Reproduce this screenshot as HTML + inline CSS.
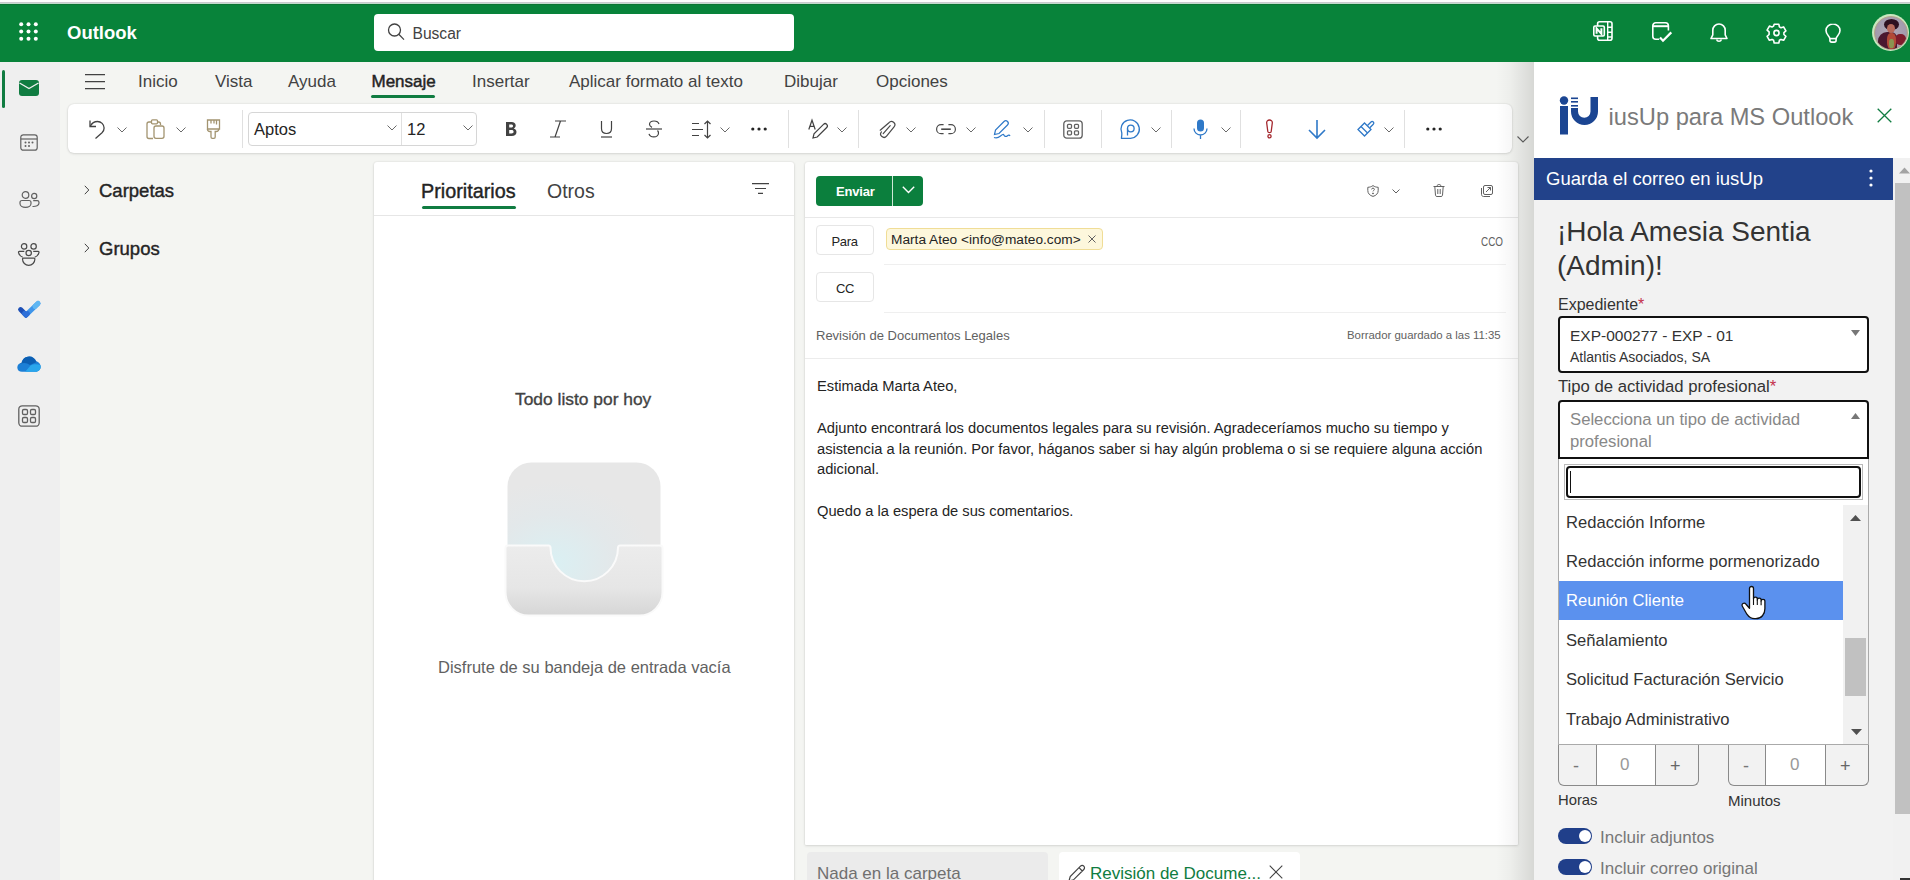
<!DOCTYPE html>
<html><head><meta charset="utf-8">
<style>
*{margin:0;padding:0;box-sizing:border-box}
html,body{width:1910px;height:880px;overflow:hidden;background:#f4f5f2;font-family:"Liberation Sans",sans-serif;color:#242424}
.a{position:absolute}
.t{position:absolute;white-space:nowrap;line-height:1}
svg{position:absolute;overflow:visible}
#topstrip{left:0;top:0;width:1910px;height:4px;background:#fdfdfd}
#topstrip2{left:0;top:2px;width:1910px;height:2px;background:linear-gradient(#cacace 0 50%,#c2dccd 50% 100%)}
#header{left:0;top:4px;width:1910px;height:58px;background:#08833a;border-top:1px solid #0b7432}
#rail{left:0;top:62px;width:60px;height:818px;background:#efefef}
#shadowband{left:1496px;top:62px;width:38px;height:818px;background:linear-gradient(to right,rgba(0,0,0,0) 0%,rgba(0,0,0,0.03) 40%,rgba(0,0,0,0.12) 100%)}
.card{position:absolute;background:#fff;border-radius:3px;box-shadow:0 0 2px rgba(0,0,0,.12),0 1px 3px rgba(0,0,0,.1)}
.sep{position:absolute;width:1px;background:#e0e0e0}
.chev{stroke:#6a6a6a;stroke-width:1;fill:none}
</style></head><body>
<div class="a" id="topstrip"></div>
<div class="a" id="topstrip2"></div>
<div class="a" id="header"></div>

<!-- waffle -->
<svg style="left:19px;top:22px" width="20" height="20" viewBox="0 0 20 20">
<g fill="#fff"><circle cx="2.2" cy="2.2" r="2"/><circle cx="9.5" cy="2.2" r="2"/><circle cx="16.8" cy="2.2" r="2"/>
<circle cx="2.2" cy="9.5" r="2"/><circle cx="9.5" cy="9.5" r="2"/><circle cx="16.8" cy="9.5" r="2"/>
<circle cx="2.2" cy="16.8" r="2"/><circle cx="9.5" cy="16.8" r="2"/><circle cx="16.8" cy="16.8" r="2"/></g></svg>
<div class="t" style="left:67px;top:24px;font-size:18.5px;font-weight:bold;color:#fff">Outlook</div>

<!-- search -->
<div class="a" style="left:374px;top:14px;width:420px;height:37px;background:#fff;border-radius:4px"></div>
<svg style="left:387px;top:23px" width="18" height="18" viewBox="0 0 18 18"><circle cx="7.5" cy="7" r="6" stroke="#424242" stroke-width="1.3" fill="none"/><path d="M11.8 11.3 L17 16.6" stroke="#424242" stroke-width="1.3"/></svg>
<div class="t" style="left:412.5px;top:25.5px;font-size:15.6px;color:#424242">Buscar</div>

<div class="a" id="rail"></div>

<!-- header right icons -->
<svg style="left:1593px;top:21px" width="20" height="20" viewBox="0 0 20 20" fill="none" stroke="#fff" stroke-width="1.6">
<rect x="4.6" y="0.8" width="14.4" height="18.4" rx="2"/><path d="M14.7 1v18M14.7 6.2h4.3M14.7 11.2h4.3M14.7 16h4.3" stroke-width="1.4"/>
<rect x="0.8" y="5" width="10.5" height="10" rx="1.2" fill="#098238"/><path d="M3.6 12.8V7.3l4.8 5.5V7.3" stroke-width="2"/></svg>
<svg style="left:1652px;top:22px" width="21" height="21" viewBox="0 0 21 21" fill="none" stroke="#fff" stroke-width="1.6">
<path d="M7.2 17.3H3.8a3 3 0 0 1-3-3V3.8a3 3 0 0 1 3-3h9.6a3 3 0 0 1 3 3v4.8"/><path d="M1 4.2h15.2" stroke-width="2"/><path d="M8 15.5l3 3.2 8.3-8.3" stroke-width="2.2"/></svg>
<svg style="left:1710px;top:23px" width="18" height="20" viewBox="0 0 18 20" fill="none" stroke="#fff" stroke-width="1.6">
<path d="M9 1c-3.6 0-6.2 2.8-6.2 6.3v4.5L1 15.5h16l-1.8-3.7V7.3C15.2 3.8 12.6 1 9 1z" stroke-linejoin="round"/><path d="M6.6 16.5a2.5 2.5 0 0 0 4.8 0"/></svg>
<svg style="left:1766px;top:23px" width="21" height="20" viewBox="0 0 21 20" fill="none" stroke="#fff" stroke-width="1.6" stroke-linejoin="round">
<path d="M8.2 1.2h4.6l.6 2.7 1.6.9 2.6-.9 2.3 4-2 1.8v1.8l2 1.8-2.3 4-2.6-.9-1.6.9-.6 2.7H8.2l-.6-2.7-1.6-.9-2.6.9-2.3-4 2-1.8V8.9l-2-1.8 2.3-4 2.6.9 1.6-.9z"/><circle cx="10.5" cy="10" r="2.6"/></svg>
<svg style="left:1825px;top:23px" width="16" height="20" viewBox="0 0 16 20" fill="none" stroke="#fff" stroke-width="1.6">
<path d="M8 1C4.2 1 1 3.9 1 7.6c0 2.3 1.1 3.8 2.3 5.1.9 1 1.6 2 1.6 3.2v1.4c0 1 .8 1.8 1.8 1.8h2.6c1 0 1.8-.8 1.8-1.8v-1.4c0-1.2.7-2.2 1.6-3.2C13.9 11.4 15 9.9 15 7.6 15 3.9 11.8 1 8 1z"/><path d="M5 15.6h6"/></svg>
<!-- avatar -->
<div class="a" style="left:1872px;top:14px;width:37px;height:37px;border-radius:50%;background:#c8e8c0"></div>
<div class="a" style="left:1873.5px;top:15.5px;width:34px;height:34px;border-radius:50%;overflow:hidden;background:radial-gradient(circle at 50% 45%,#b0a8b8 0%,#a49cae 60%,#9a8a80 100%);border:1px solid #b5a48a">
<div class="a" style="left:3px;top:15px;width:19px;height:18px;border-radius:9px 6px 0 0;background:#4a1830"></div>
<div class="a" style="left:20px;top:17px;width:11px;height:11px;border-radius:45%;background:#7e1c2c"></div>
<div class="a" style="left:12.5px;top:16px;width:9px;height:16px;border-radius:40%;background:#b24a38"></div>
<div class="a" style="left:14.5px;top:22px;width:5px;height:9px;border-radius:40%;background:#8a9450"></div>
<div class="a" style="left:9px;top:2px;width:15px;height:11px;border-radius:50%;background:#2e1020"></div>
<div class="a" style="left:12.5px;top:7px;width:8px;height:9px;border-radius:50%;background:#b86a5c"></div>
</div>

<!-- left rail icons -->
<div class="a" style="left:2px;top:70px;width:3px;height:38px;border-radius:2px;background:#107c41"></div>
<svg style="left:19px;top:80px" width="20" height="16" viewBox="0 0 20 16"><rect x="0" y="0" width="20" height="16" rx="3" fill="#107c41"/><path d="M0.5 3 L10 8.5 L19.5 3" stroke="#efefef" stroke-width="1.4" fill="none"/></svg>
<svg style="left:20px;top:134px" width="18" height="17" viewBox="0 0 18 17" fill="none" stroke="#616161" stroke-width="1.2">
<rect x="0.8" y="0.8" width="16.4" height="15.4" rx="2.5"/><path d="M0.8 5h16.4"/><g fill="#616161" stroke="none"><circle cx="5.5" cy="8.5" r="1"/><circle cx="9" cy="8.5" r="1"/><circle cx="12.5" cy="8.5" r="1"/><circle cx="5.5" cy="12" r="1"/><circle cx="9" cy="12" r="1"/></g></svg>
<svg style="left:19px;top:191px" width="21" height="17" viewBox="0 0 21 17" fill="none" stroke="#616161" stroke-width="1.2">
<circle cx="6.5" cy="4" r="3.3"/><path d="M1 11.5c0-1.2.8-2 2-2h7c1.2 0 2 .8 2 2v1c0 2-2.2 3.8-5.5 3.8S1 14.5 1 12.5z"/><circle cx="15.2" cy="5" r="2.6"/><path d="M13.5 15.5c3.5.2 6.5-1 6.5-3.5v-.5c0-1-.7-1.8-1.8-1.8h-4"/></svg>
<svg style="left:17px;top:241px" width="24" height="26" viewBox="0 0 24 26" fill="none" stroke="#4a4a4a" stroke-width="1.2">
<circle cx="7.1" cy="5.4" r="2.7"/><circle cx="16.6" cy="5.4" r="2.7"/><circle cx="11.7" cy="12" r="2.7"/>
<path d="M7.3 10.4H2.3c-.5 0-.9.4-.8.9.5 2.4 2 4.2 4.3 5"/><path d="M16.2 10.4h5c.5 0 .9.4.8.9-.5 2.4-2 4.2-4.3 5"/>
<path d="M6.4 17.2h10.6c.5 0 .9.4.9.9a6.2 6.2 0 0 1-12.4 0c0-.5.4-.9.9-.9z"/></svg>
<svg style="left:17px;top:299.5px" width="24" height="20" viewBox="0 0 24 20" fill="none" stroke-linecap="round" stroke-linejoin="round">
<path d="M9 15L21 3.5" stroke="#3f95ea" stroke-width="5"/><path d="M18 6.4L21 3.5" stroke="#5fb6f2" stroke-width="5"/><path d="M3.6 9.6L9 15" stroke="#1d4fb6" stroke-width="5"/><path d="M7.5 13.5L9 15l1.5-1.4" stroke="#2d6fd8" stroke-width="5"/></svg>
<svg style="left:17px;top:356px" width="24" height="16" viewBox="0 0 24 16">
<defs><clipPath id="cl"><path d="M5 15.8C2.3 15.8 0.3 13.9 0.3 11.4 0.3 9 2.1 7.2 4.5 7 5.3 3.3 8.3 0.5 12.2 0.5c3.3 0 6 2 7 5 2.6.4 4.5 2.6 4.5 5.3 0 2.8-2.2 5-5 5z"/></clipPath></defs>
<g clip-path="url(#cl)"><rect x="0" y="0" width="24" height="16" fill="#1c7fd6"/><path d="M3 8C7 6 10 7 13 9L24 4V0H0z" fill="#0c5fb3"/><path d="M8 16L13.5 9.5C16 8 20 8 24 9V16z" fill="#2aa6ec"/></g></svg>
<svg style="left:18px;top:405px" width="22" height="22" viewBox="0 0 22 22" fill="none" stroke="#616161" stroke-width="1.3">
<rect x="0.8" y="0.8" width="20.4" height="20.4" rx="3.5"/><rect x="4.5" y="4.5" width="5" height="5" rx="1.3"/><rect x="12.5" y="4.5" width="5" height="5" rx="1.3"/><rect x="4.5" y="12.5" width="5" height="5" rx="1.3"/><rect x="12.5" y="12.5" width="5" height="5" rx="1.3"/></svg>

<!-- ribbon tabs -->
<svg style="left:85px;top:74px" width="20" height="15" viewBox="0 0 20 15" stroke="#424242" stroke-width="1.1"><path d="M0 0.6h20M0 7.6h20M0 14.6h20"/></svg>
<div class="t" style="left:138px;top:73px;font-size:17px;color:#424242">Inicio</div>
<div class="t" style="left:215px;top:73px;font-size:17px;color:#424242">Vista</div>
<div class="t" style="left:288px;top:73px;font-size:17px;color:#424242">Ayuda</div>
<div class="t" style="left:371.5px;top:73px;font-size:17px;color:#242424;-webkit-text-stroke:0.45px #242424">Mensaje</div>
<div class="a" style="left:371px;top:95px;width:64px;height:3px;border-radius:2px;background:#107c41"></div>
<div class="t" style="left:472px;top:73px;font-size:17px;color:#424242">Insertar</div>
<div class="t" style="left:569px;top:73px;font-size:17px;color:#424242">Aplicar formato al texto</div>
<div class="t" style="left:784px;top:73px;font-size:17px;color:#424242">Dibujar</div>
<div class="t" style="left:876px;top:73px;font-size:17px;color:#424242">Opciones</div>

<!-- TOOLBAR -->
<div class="card" style="left:68px;top:104px;width:1444px;height:49px;border-radius:6px"></div>
<div id="toolbar">
<!-- undo -->
<svg style="left:89px;top:119px" width="17" height="20" viewBox="0 0 17 20" fill="none" stroke="#424242" stroke-width="1.3">
<path d="M1 1.5v6h6"/><path d="M1.3 7.2C2.8 4.3 5.3 2.5 8.5 2.5c3.6 0 6.6 2.9 6.6 6.5 0 1.9-.8 3.6-2.1 4.8L6.5 19.5"/></svg>
<svg style="left:117px;top:127px" width="10" height="6" viewBox="0 0 10 6"><path class="chev" d="M0.5 0.5l4.5 4.5 4.5-4.5"/></svg>
<!-- paste -->
<svg style="left:146px;top:119px" width="19" height="20" viewBox="0 0 19 20" fill="none" stroke="#a39470" stroke-width="1.3">
<path d="M6 3H3a2 2 0 0 0-2 2v12.5a2 2 0 0 0 2 2h4"/><rect x="5.5" y="0.8" width="6" height="4" rx="1"/><path d="M11.5 3h1a2 2 0 0 1 2 2v1"/><rect x="8" y="7" width="10" height="12.3" rx="2"/></svg>
<svg style="left:176px;top:127px" width="10" height="6" viewBox="0 0 10 6"><path class="chev" d="M0.5 0.5l4.5 4.5 4.5-4.5"/></svg>
<!-- format painter -->
<svg style="left:206px;top:119px" width="15" height="20" viewBox="0 0 15 20" fill="none" stroke="#a39470" stroke-width="1.3">
<path d="M1.5 1h12v9h-12z"/><path d="M5 1v3.5M8 1v3.5M10.5 1v4.5"/><path d="M1.5 10c0 1.5 1 2.5 2.5 2.5h1v5.5c0 .8.6 1.3 1.3 1.3h1.6c.7 0 1.3-.5 1.3-1.3v-5.5h1c1.5 0 2.5-1 2.5-2.5"/></svg>
<div class="sep" style="left:242px;top:110px;height:38px"></div>
<!-- font boxes -->
<div class="a" style="left:248px;top:112px;width:229px;height:34px;border:1px solid #d6d6d6;border-radius:4px;background:#fff"></div>
<div class="a" style="left:401px;top:113px;width:1px;height:32px;background:#e0e0e0"></div>
<div class="t" style="left:254px;top:121px;font-size:16.5px;color:#242424">Aptos</div>
<svg style="left:387px;top:125px" width="10" height="6" viewBox="0 0 10 6"><path class="chev" d="M0.5 0.5l4.5 4.5 4.5-4.5"/></svg>
<div class="t" style="left:407px;top:121px;font-size:16.5px;color:#242424">12</div>
<svg style="left:463px;top:125px" width="10" height="6" viewBox="0 0 10 6"><path class="chev" d="M0.5 0.5l4.5 4.5 4.5-4.5"/></svg>
<!-- B I U S -->
<svg style="left:505px;top:121px" width="13" height="16" viewBox="0 0 13 16"><path d="M1 1h5.5c2.6 0 4.2 1.3 4.2 3.5 0 1.4-.8 2.5-2 3 1.6.4 2.8 1.7 2.8 3.6 0 2.6-1.9 4-4.8 4H1z M4.2 3.6v3h2c1.2 0 1.9-.6 1.9-1.5s-.7-1.5-1.9-1.5z M4.2 9v3.4h2.3c1.4 0 2.1-.6 2.1-1.7S7.9 9 6.5 9z" fill="#424242" fill-rule="evenodd"/></svg>
<svg style="left:549px;top:120px" width="18" height="18" viewBox="0 0 18 18" fill="none" stroke="#424242" stroke-width="1.2"><path d="M6 1h11M1 17h10M11.5 1L6 17"/></svg>
<svg style="left:600px;top:120px" width="13" height="18" viewBox="0 0 13 18" fill="none" stroke="#424242" stroke-width="1.2"><path d="M1.5 1v7.5c0 3 2 5 5 5s5-2 5-5V1"/><path d="M1 17h11"/></svg>
<svg style="left:645px;top:120px" width="18" height="18" viewBox="0 0 18 18" fill="none" stroke="#424242" stroke-width="1.2"><path d="M14 4c-.6-2-2.5-3-5-3-2.8 0-4.5 1.4-4.5 3.3 0 1.4.8 2.4 2.5 3.1"/><path d="M1 9h16"/><path d="M12.5 10.5c.6.6 1 1.4 1 2.4 0 2.3-2 4-4.7 4-2.5 0-4.3-1.1-4.8-3"/></svg>
<!-- line spacing -->
<svg style="left:691px;top:120px" width="21" height="19" viewBox="0 0 21 19" fill="none" stroke="#424242" stroke-width="1.2"><path d="M1 3.5h7M1 9.5h11M1 15.5h7"/><path d="M16.5 1v17M13.5 4l3-3 3 3M13.5 15l3 3 3-3"/></svg>
<svg style="left:720px;top:127px" width="10" height="6" viewBox="0 0 10 6"><path class="chev" d="M0.5 0.5l4.5 4.5 4.5-4.5"/></svg>
<svg style="left:751px;top:127px" width="16" height="4" viewBox="0 0 16 4" fill="#242424"><circle cx="1.8" cy="2" r="1.6"/><circle cx="8" cy="2" r="1.6"/><circle cx="14.2" cy="2" r="1.6"/></svg>
<div class="sep" style="left:788px;top:110px;height:38px"></div>
<!-- editor -->
<svg style="left:808px;top:119px" width="21" height="20" viewBox="0 0 21 20" fill="none" stroke="#424242" stroke-width="1.2"><path d="M0.8 10.5L4 1.2 7.2 10.5M2 7.3h4"/><path d="M5 19l1-4.2L15.5 5.3c.9-.9 2.3-.9 3.2 0 .9.9.9 2.3 0 3.2L9.2 18z"/></svg>
<svg style="left:837px;top:127px" width="10" height="6" viewBox="0 0 10 6"><path class="chev" d="M0.5 0.5l4.5 4.5 4.5-4.5"/></svg>
<div class="sep" style="left:858px;top:110px;height:38px"></div>
<!-- paperclip -->
<svg style="left:879px;top:120px" width="17" height="19" viewBox="0 0 17 19" fill="none" stroke="#4a4a4a" stroke-width="1.2" stroke-linecap="round">
<path d="M1.2 10.2L9.94 2.71A3.3 3.3 0 0 1 15.06 6.89L7.56 16.09A3.3 3.3 0 0 1 2.44 11.91"/><path d="M4.2 13.6L11.2 5.6"/></svg>
<svg style="left:906px;top:127px" width="10" height="6" viewBox="0 0 10 6"><path class="chev" d="M0.5 0.5l4.5 4.5 4.5-4.5"/></svg>
<!-- link -->
<svg style="left:936px;top:123.5px" width="20" height="11" viewBox="0 0 20 11" fill="none" stroke="#4a4a4a" stroke-width="1.2"><path d="M7.6 0.7H5.1a4.5 4.5 0 0 0 0 9H7.6M12.4 0.7h2.5a4.5 4.5 0 0 1 0 9h-2.5"/><path d="M5.2 5.2h9.6" stroke-width="1.6"/></svg>
<svg style="left:966px;top:127px" width="10" height="6" viewBox="0 0 10 6"><path class="chev" d="M0.5 0.5l4.5 4.5 4.5-4.5"/></svg>
<!-- signature pen -->
<svg style="left:993px;top:119px" width="21" height="20" viewBox="0 0 21 20" fill="none" stroke="#2f79c8" stroke-width="1.2"><path d="M1.5 15.5l1-4.5 8.5-8.5c1-1 2.5-1 3.5 0s1 2.5 0 3.5L6 14.5z"/><path d="M1 18.5c2 .8 4.5.2 6.5-1.5s3-2 3.5-.8c.5 1.2 2 1.8 3.5.5 1-.8 2-.6 2.5.3"/></svg>
<svg style="left:1023px;top:127px" width="10" height="6" viewBox="0 0 10 6"><path class="chev" d="M0.5 0.5l4.5 4.5 4.5-4.5"/></svg>
<div class="sep" style="left:1044px;top:110px;height:38px"></div>
<!-- apps -->
<svg style="left:1063px;top:120px" width="20" height="19" viewBox="0 0 20 19" fill="none" stroke="#616161" stroke-width="1.3"><rect x="0.8" y="0.8" width="18.4" height="17.4" rx="3"/><rect x="4.5" y="4.3" width="4" height="4" rx="1"/><rect x="11.5" y="4.3" width="4" height="4" rx="1"/><rect x="4.5" y="10.8" width="4" height="4" rx="1"/><rect x="11.5" y="10.8" width="4" height="4" rx="1"/></svg>
<div class="sep" style="left:1101px;top:110px;height:38px"></div>
<!-- loop -->
<svg style="left:1120px;top:119px" width="21" height="20" viewBox="0 0 21 20" fill="none" stroke="#2f79c8" stroke-width="1.3"><path d="M1.5 18.5c.3-1.5.4-3 .3-4.5A9.2 9.2 0 1 1 10.5 19.3H1.5z"/><circle cx="10.8" cy="9.5" r="3.3"/><path d="M7.5 9.5v7"/></svg>
<svg style="left:1151px;top:127px" width="10" height="6" viewBox="0 0 10 6"><path class="chev" d="M0.5 0.5l4.5 4.5 4.5-4.5"/></svg>
<div class="sep" style="left:1171px;top:110px;height:38px"></div>
<!-- mic -->
<svg style="left:1193px;top:119px" width="15" height="20" viewBox="0 0 15 20"><rect x="4" y="0.5" width="7" height="12" rx="3.5" fill="#2f79c8"/><path d="M1 9.5a6.5 6.5 0 0 0 13 0M7.5 16v4" stroke="#2f79c8" stroke-width="1.3" fill="none"/></svg>
<svg style="left:1221px;top:127px" width="10" height="6" viewBox="0 0 10 6"><path class="chev" d="M0.5 0.5l4.5 4.5 4.5-4.5"/></svg>
<div class="sep" style="left:1240px;top:110px;height:38px"></div>
<!-- importance -->
<svg style="left:1265px;top:119px" width="9" height="20" viewBox="0 0 9 20" fill="none" stroke="#a4262c" stroke-width="1.3"><path d="M4.5 1c1.8 0 3 1.2 2.8 3L6.2 12.5c-.1.8-.8 1.2-1.7 1.2s-1.6-.4-1.7-1.2L1.7 4C1.5 2.2 2.7 1 4.5 1z"/><circle cx="4.5" cy="17.3" r="1.6"/></svg>
<!-- down arrow -->
<svg style="left:1308px;top:119px" width="18" height="20" viewBox="0 0 18 20" fill="none" stroke="#2f79c8" stroke-width="1.6"><path d="M9 1v18M1 11l8 8 8-8"/></svg>
<!-- brush -->
<svg style="left:1356px;top:119px" width="19" height="19" viewBox="0 0 19 19" fill="none" stroke="#2f79c8" stroke-width="1.3"><path d="M2 10.5l6.5-6.5 6.5 6.5-6.5 6.5z"/><path d="M5 7.5l6.5 6.5"/><path d="M11.5 6.5l3.5-3.5a1.6 1.6 0 0 1 2.3 2.3L13.8 8.8"/></svg>
<svg style="left:1384px;top:127px" width="10" height="6" viewBox="0 0 10 6"><path class="chev" d="M0.5 0.5l4.5 4.5 4.5-4.5"/></svg>
<div class="sep" style="left:1404px;top:110px;height:38px"></div>
<svg style="left:1426px;top:127px" width="16" height="4" viewBox="0 0 16 4" fill="#242424"><circle cx="1.8" cy="2" r="1.6"/><circle cx="8" cy="2" r="1.6"/><circle cx="14.2" cy="2" r="1.6"/></svg>
<svg style="left:1517px;top:136px" width="12" height="7" viewBox="0 0 12 7"><path d="M0.5 0.5l5.5 5.5 5.5-5.5" stroke="#616161" stroke-width="1.1" fill="none"/></svg>
</div>

<!-- folder pane -->
<svg style="left:84px;top:185px" width="6" height="10" viewBox="0 0 6 10"><path d="M0.8 0.8l4 4.2-4 4.2" stroke="#424242" stroke-width="1" fill="none"/></svg>
<div class="t" style="left:99px;top:182px;font-size:18.5px;color:#242424;-webkit-text-stroke:0.4px #242424">Carpetas</div>
<svg style="left:84px;top:243px" width="6" height="10" viewBox="0 0 6 10"><path d="M0.8 0.8l4 4.2-4 4.2" stroke="#424242" stroke-width="1" fill="none"/></svg>
<div class="t" style="left:99px;top:240px;font-size:18.5px;color:#242424;-webkit-text-stroke:0.4px #242424">Grupos</div>

<!-- mail list -->
<div class="card" style="left:374px;top:162px;width:420px;height:730px;border-radius:3px 3px 0 0"></div>
<div class="a" style="left:374px;top:215px;width:420px;height:1px;background:#e6e6e6"></div>
<div class="t" style="left:421px;top:182px;font-size:19.8px;color:#242424;-webkit-text-stroke:0.4px #242424">Prioritarios</div>
<div class="a" style="left:422px;top:206px;width:94px;height:3px;border-radius:2px;background:#107c41"></div>
<div class="t" style="left:547px;top:182px;font-size:19.5px;color:#424242">Otros</div>
<svg style="left:752px;top:183px" width="17" height="11" viewBox="0 0 17 11" stroke="#424242" stroke-width="1.1"><path d="M0 0.6h17M3 5.5h11M6 10.4h5"/></svg>
<div class="t" style="left:515px;top:391px;font-size:17.4px;color:#424242;-webkit-text-stroke:0.35px #424242">Todo listo por hoy</div>
<!-- tray illustration -->
<svg style="left:505px;top:462px" width="158" height="154" viewBox="0 0 158 154">
<defs>
<linearGradient id="trb" x1="0" y1="0" x2="0" y2="1"><stop offset="0" stop-color="#e6e6e6"/><stop offset="1" stop-color="#e9e9e9"/></linearGradient>
<radialGradient id="trg" cx="0.3" cy="0.8" r="0.65"><stop offset="0" stop-color="#daf0f3"/><stop offset="0.6" stop-color="#e3e8ea"/><stop offset="1" stop-color="#e7e7e7"/></radialGradient>
<linearGradient id="trf" x1="0" y1="0" x2="0" y2="1"><stop offset="0" stop-color="#ececec"/><stop offset=".6" stop-color="#e6e6e6"/><stop offset="1" stop-color="#d6d6d6"/></linearGradient>
</defs>
<rect x="2.5" y="0.5" width="153" height="125" rx="24" fill="url(#trg)"/>
<path d="M3 83.5H43.5c1.2 0 1.8.8 2 2A33.5 33.5 0 0 0 113 85.5c.2-1.2.8-2 2-2H155c1.5 0 2.5 1 2.5 2.5v44c0 13-10 23.5-23 23.5H23.5C10.5 153.5.5 143 .5 130V86c0-1.5 1-2.5 2.5-2.5z" fill="url(#trf)" stroke="#fafafa" stroke-width="2"/>
</svg>
<div class="t" style="left:438px;top:659px;font-size:16.5px;color:#616161">Disfrute de su bandeja de entrada vacía</div>

<!-- compose -->
<div class="card" style="left:805px;top:162px;width:713px;height:683px;border-radius:3px 3px 1px 1px"></div>
<div class="a" style="left:816px;top:176px;width:107px;height:30px;border-radius:4px;background:#0b7f3d"></div>
<div class="a" style="left:892px;top:176px;width:1px;height:30px;background:#cfe8d6"></div>
<div class="t" style="left:836px;top:185px;font-size:13px;font-weight:bold;color:#fff;letter-spacing:-0.2px">Enviar</div>
<svg style="left:902px;top:186px" width="13" height="8" viewBox="0 0 13 8"><path d="M0.8 0.8l5.7 5.7 5.7-5.7" stroke="#fff" stroke-width="1.4" fill="none"/></svg>
<!-- shield, chevron, trash, popout -->
<svg style="left:1367px;top:185px" width="12" height="12" viewBox="0 0 12 12" fill="none" stroke="#616161" stroke-width="1"><path d="M6 0.6C4.3 1.8 2.7 2.2 0.8 2.3v3.2c0 3 2 5 5.2 5.9 3.2-.9 5.2-2.9 5.2-5.9V2.3C9.3 2.2 7.7 1.8 6 .6z"/><path d="M4.6 4.4c0-.8.6-1.3 1.4-1.3s1.4.5 1.4 1.3c0 1-1.4 1-1.4 2" /><circle cx="6" cy="8.4" r=".5" fill="#616161"/></svg>
<svg style="left:1392px;top:189px" width="8" height="5" viewBox="0 0 8 5"><path d="M0.5 0.5l3.5 3.5 3.5-3.5" stroke="#616161" stroke-width="1" fill="none"/></svg>
<svg style="left:1433px;top:184px" width="12" height="13" viewBox="0 0 12 13" fill="none" stroke="#616161" stroke-width="1"><path d="M0.5 2.5h11M4.3 2.5V1.5c0-.5.4-.9.9-.9h1.6c.5 0 .9.4.9.9v1M1.8 2.5l.7 8.8c.1.8.7 1.2 1.4 1.2h4.2c.7 0 1.3-.4 1.4-1.2l.7-8.8M4.8 5v5M7.2 5v5"/></svg>
<svg style="left:1481px;top:185px" width="12" height="12" viewBox="0 0 12 12" fill="none" stroke="#616161" stroke-width="1"><rect x="2.5" y="0.5" width="9" height="9" rx="1.5"/><path d="M0.5 3v6.5c0 1.1.9 2 2 2H9"/><path d="M5 7l4.5-4.5M6.5 2.5h3v3"/></svg>
<div class="a" style="left:805px;top:217px;width:713px;height:1px;background:#e8e8e8"></div>
<div class="a" style="left:816px;top:225px;width:58px;height:30px;border:1px solid #e6e6e6;border-radius:4px;background:#fff"></div>
<div class="t" style="left:831.5px;top:235px;font-size:13px;color:#242424;letter-spacing:-0.3px">Para</div>
<div class="a" style="left:886px;top:228px;width:217px;height:22px;border:1px solid #f0dd96;border-radius:4px;background:#fdf7dc"></div>
<div class="t" style="left:891px;top:233px;font-size:13.7px;color:#242424">Marta Ateo &lt;info@mateo.com&gt;</div>
<svg style="left:1088px;top:235px" width="8" height="8" viewBox="0 0 8 8"><path d="M0.5 0.5l7 7M7.5 0.5l-7 7" stroke="#616161" stroke-width="1"/></svg>
<div class="t" style="left:1481px;top:235px;font-size:13px;color:#616161;transform:scaleX(0.76);transform-origin:0 0">CCO</div>
<div class="a" style="left:884px;top:264px;width:622px;height:1px;background:#efefef"></div>
<div class="a" style="left:816px;top:272px;width:58px;height:30px;border:1px solid #e6e6e6;border-radius:4px;background:#fff"></div>
<div class="t" style="left:836px;top:282px;font-size:13px;color:#242424;letter-spacing:-0.5px">CC</div>
<div class="a" style="left:884px;top:312px;width:622px;height:1px;background:#efefef"></div>
<div class="t" style="left:816px;top:329px;font-size:13px;color:#616161">Revisión de Documentos Legales</div>
<div class="t" style="left:1347px;top:330px;font-size:11.4px;color:#616161">Borrador guardado a las 11:35</div>
<div class="a" style="left:805px;top:358px;width:713px;height:1px;background:#ececec"></div>
<div id="body" class="a" style="left:817px;top:376.3px;width:700px;font-size:14.7px;line-height:20.75px;color:#242424">
Estimada Marta Ateo,<br><br>Adjunto encontrará los documentos legales para su revisión. Agradeceríamos mucho su tiempo y<br>asistencia a la reunión. Por favor, háganos saber si hay algún problema o si se requiere alguna acción<br>adicional.<br><br>Quedo a la espera de sus comentarios.</div>

<!-- bottom tabs -->
<div class="a" style="left:807px;top:852px;width:241px;height:40px;border-radius:4px 4px 0 0;background:#ebebeb"></div>
<div class="t" style="left:817px;top:865px;font-size:17px;color:#707070">Nada en la carpeta</div>
<div class="a" style="left:1059px;top:852px;width:241px;height:40px;border-radius:4px 4px 0 0;background:#fff"></div>
<svg style="left:1068px;top:864px" width="18" height="18" viewBox="0 0 18 18" fill="none" stroke="#424242" stroke-width="1.2"><path d="M1 17l1.2-4.5L12.5 2.2c1-1 2.4-1 3.3 0s1 2.4 0 3.3L5.5 15.8z M11 3.7l3.3 3.3"/></svg>
<div class="t" style="left:1090px;top:865px;font-size:17px;color:#107c41">Revisión de Docume...</div>
<svg style="left:1269px;top:865px" width="14" height="14" viewBox="0 0 14 14"><path d="M0.7 0.7l12.6 12.6M13.3 0.7L0.7 13.3" stroke="#424242" stroke-width="1.05"/></svg>

<div class="a" id="shadowband"></div>

<!-- ADD-IN PANE -->
<div class="a" style="left:1534px;top:62px;width:376px;height:96px;background:#fff"></div>
<div class="a" style="left:1534px;top:158px;width:376px;height:722px;background:#f2f2f2"></div>
<!-- logo -->
<svg style="left:1559px;top:96px" width="40" height="39" viewBox="0 0 40 39">
<circle cx="5" cy="4.5" r="4.2" fill="#1b4592"/><rect x="1" y="10" width="8" height="28.5" fill="#1b4592"/>
<rect x="12" y="1.5" width="7" height="1.6" fill="#1b4592"/><rect x="12" y="5" width="7" height="1.6" fill="#1b4592"/><rect x="12" y="9" width="7" height="1.6" fill="#1b4592"/>
<path d="M12 12H19V15.5A6.25 6.25 0 0 0 31.5 15.5V1H39V15.5A13.5 13.5 0 0 1 12 15.5Z" fill="#1b4592"/></svg>
<div class="t" style="left:1608.5px;top:106px;font-size:23.7px;color:#7a7a7a">iusUp para MS Outlook</div>
<svg style="left:1877px;top:108px" width="15" height="15" viewBox="0 0 15 15"><path d="M0.7 0.7l13.6 13.6M14.3 0.7L0.7 14.3" stroke="#107c41" stroke-width="1.3"/></svg>

<div class="a" style="left:1534px;top:158px;width:359px;height:42px;background:#22428a"></div>
<div class="t" style="left:1546px;top:170px;font-size:18.5px;color:#fff">Guarda el correo en iusUp</div>
<svg style="left:1869px;top:169px" width="4" height="18" viewBox="0 0 4 18" fill="#fff"><circle cx="2" cy="2" r="1.6"/><circle cx="2" cy="9" r="1.6"/><circle cx="2" cy="16" r="1.6"/></svg>
<!-- scrollbar -->
<div class="a" style="left:1893px;top:158px;width:17px;height:722px;background:#f1f1f1"></div>
<svg style="left:1899px;top:167px" width="11" height="7" viewBox="0 0 11 7"><path d="M0 6.5L5.5 0.5 11 6.5z" fill="#a3a3a3"/></svg>
<div class="a" style="left:1895px;top:183px;width:15px;height:631px;background:#c1c1c1"></div>
<div class="a" style="left:1900px;top:878px;width:10px;height:2px;background:#333"></div>

<div class="t" style="left:1557px;top:215px;font-size:28px;color:#333;line-height:34px">¡Hola Amesia Sentia<br>(Admin)!</div>
<div class="t" style="left:1558px;top:297px;font-size:16px;color:#333">Expediente<span style="color:#c4314b">*</span></div>
<div class="a" style="left:1558px;top:316px;width:311px;height:57px;border:2px solid #111;border-radius:4px;background:#fff"></div>
<div class="t" style="left:1570px;top:328px;font-size:15.5px;color:#333">EXP-000277 - EXP - 01</div>
<div class="t" style="left:1570px;top:350px;font-size:14px;color:#333">Atlantis Asociados, SA</div>
<svg style="left:1851px;top:330px" width="9" height="6" viewBox="0 0 9 6"><path d="M0 0h9L4.5 6z" fill="#777"/></svg>

<div class="t" style="left:1558px;top:379px;font-size:16.7px;color:#333">Tipo de actividad profesional<span style="color:#c4314b">*</span></div>
<div class="a" style="left:1558px;top:400px;width:311px;height:60px;border:2px solid #111;border-bottom-width:3px;border-radius:4px 4px 0 0;background:#fff"></div>
<div class="t" style="left:1570px;top:408.5px;font-size:16.7px;color:#888;line-height:22px">Selecciona un tipo de actividad<br>profesional</div>
<svg style="left:1851px;top:413px" width="9" height="6" viewBox="0 0 9 6"><path d="M0 6h9L4.5 0z" fill="#777"/></svg>

<!-- dropdown -->
<div class="a" style="left:1558px;top:459px;width:311px;height:286px;border:1px solid #aaa;border-top:none;background:#fff"></div>
<div class="a" style="left:1564px;top:464px;width:299px;height:36px;border:1px solid #bbb;background:#fff"></div>
<div class="a" style="left:1566px;top:466px;width:295px;height:32px;border:2.5px solid #111;border-radius:4px;background:#fff"></div>
<div class="a" style="left:1570px;top:471px;width:1px;height:22px;background:#111"></div>
<div class="a" style="left:1843px;top:505px;width:25px;height:239px;background:#f1f1f1"></div>
<svg style="left:1850px;top:515px" width="11" height="6" viewBox="0 0 11 6"><path d="M0 6h11L5.5 0z" fill="#505050"/></svg>
<svg style="left:1851px;top:729px" width="11" height="6" viewBox="0 0 11 6"><path d="M0 0h11L5.5 6z" fill="#505050"/></svg>
<div class="a" style="left:1845px;top:638px;width:21px;height:58px;background:#c1c1c1"></div>
<div class="a" style="left:1559px;top:581px;width:284px;height:39px;background:#5b91ee"></div>
<div class="t" style="left:1566px;top:515px;font-size:16.6px;color:#333">Redacción Informe</div>
<div class="t" style="left:1566px;top:554px;font-size:16.6px;color:#333">Redacción informe pormenorizado</div>
<div class="t" style="left:1566px;top:593px;font-size:16.6px;color:#fff">Reunión Cliente</div>
<div class="t" style="left:1566px;top:633px;font-size:16.6px;color:#333">Señalamiento</div>
<div class="t" style="left:1566px;top:672px;font-size:16.6px;color:#333">Solicitud Facturación Servicio</div>
<div class="t" style="left:1566px;top:712px;font-size:16.6px;color:#333">Trabajo Administrativo</div>
<!-- hand cursor -->
<svg style="left:1741px;top:586px" width="27" height="33" viewBox="0 0 27 33">
<path d="M8.5 2.5c0-1.2 1-2 2-2s2 .8 2 2v10.5c0-1.1.9-1.8 1.9-1.8s1.9.8 1.9 1.8v1c0-1.1.9-1.8 1.9-1.8s1.9.8 1.9 1.8v1.2c0-1.1.9-1.8 1.9-1.8s1.9.8 1.9 1.8v7.5c0 5.5-3.5 10-9 10h-1.5c-3.5 0-5.5-1.5-7.5-4.5L1.5 20.5c-.8-1.2-.5-2.4.5-3 1-.6 2.2-.3 3 .7l3.5 4z" fill="#fff" stroke="#111" stroke-width="1.3" stroke-linejoin="round"/>
<path d="M12.5 13v6M16.3 14v5M20.1 15.2v4" stroke="#111" stroke-width="1.1"/></svg>

<!-- steppers -->
<div class="a" style="left:1558px;top:745px;width:141px;height:41px;border:1px solid #8a8a8a;border-top:none;border-radius:0 0 6px 6px;background:#f2f2f2"></div>
<div class="a" style="left:1596px;top:745px;width:60px;height:40px;background:#fff;border-left:1.5px solid #8a8a8a;border-right:1px solid #8a8a8a"></div>
<div class="t" style="left:1573px;top:756.5px;font-size:18px;color:#777">-</div>
<div class="t" style="left:1620px;top:756px;font-size:17px;color:#999">0</div>
<div class="t" style="left:1670px;top:756.5px;font-size:18px;color:#666">+</div>
<div class="a" style="left:1728px;top:745px;width:141px;height:41px;border:1px solid #8a8a8a;border-top:none;border-radius:0 0 6px 6px;background:#f2f2f2"></div>
<div class="a" style="left:1765px;top:745px;width:61px;height:40px;background:#fff;border-left:1px solid #8a8a8a;border-right:1px solid #8a8a8a"></div>
<div class="t" style="left:1743px;top:756.5px;font-size:18px;color:#777">-</div>
<div class="t" style="left:1790px;top:756px;font-size:17px;color:#999">0</div>
<div class="t" style="left:1840px;top:756.5px;font-size:18px;color:#666">+</div>
<div class="t" style="left:1558px;top:792.5px;font-size:14.8px;color:#333">Horas</div>
<div class="t" style="left:1728px;top:793px;font-size:15px;color:#333">Minutos</div>
<!-- toggles -->
<div class="a" style="left:1558px;top:828px;width:34px;height:16px;border-radius:8px;background:#203f8a"></div>
<div class="a" style="left:1579px;top:830px;width:12px;height:12px;border-radius:50%;background:#fff"></div>
<div class="t" style="left:1600px;top:829px;font-size:17px;color:#777">Incluir adjuntos</div>
<div class="a" style="left:1558px;top:859px;width:34px;height:16px;border-radius:8px;background:#203f8a"></div>
<div class="a" style="left:1579px;top:861px;width:12px;height:12px;border-radius:50%;background:#fff"></div>
<div class="t" style="left:1600px;top:860px;font-size:17px;color:#777">Incluir correo original</div>

</body></html>
